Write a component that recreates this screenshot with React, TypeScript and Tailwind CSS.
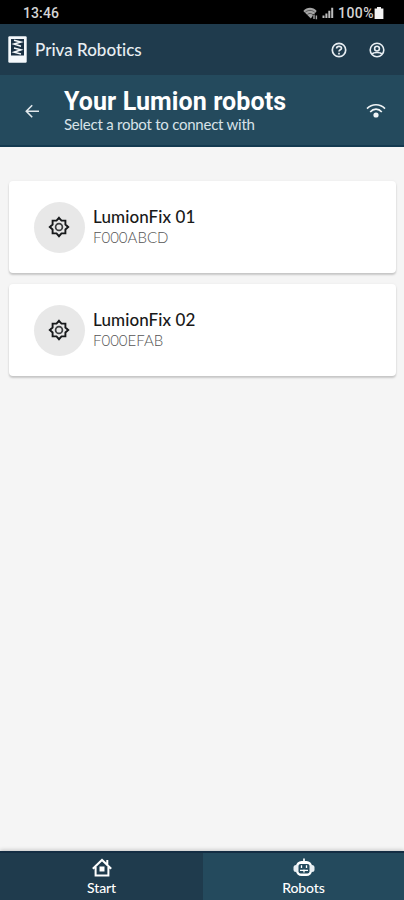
import React from "react";

function Gear() {
  return (
    <svg className="-ml-px" width="22" height="22" viewBox="0 0 22 22" fill="none" stroke="#17191b" strokeWidth="1.9" strokeLinejoin="miter">
      <path d="M11 1.8 L13.5 4.6 H17.4 V8.5 L20.2 11 L17.4 13.5 V17.4 H13.5 L11 20.2 L8.5 17.4 H4.6 V13.5 L1.8 11 L4.6 8.5 V4.6 H8.5 Z" />
      <circle cx="11" cy="11" r="3.4" stroke="#3b3d3f" strokeWidth="1.7" />
    </svg>
  );
}

function StatusBar() {
  return (
    <div className="flex h-6 shrink-0 items-center bg-black pt-[2px] pl-[23px] text-[#d4d4d4]">
      <span className="font-['Roboto'] text-[14px] leading-none font-medium tracking-[0.1px]">13:46</span>
      <div className="ml-auto flex items-center pr-5">
        <svg width="16" height="13" viewBox="0 0 16 13">
          <path d="M0.3 4 C4 -0.2 10 -0.2 13.7 4 L7.8 11.5 Z" fill="#a5a5a5" />
          <path d="M2.3 5.2 C5 2.8 9 2.8 11.7 5.2 M4.4 7.5 C6.2 6 8 6 9.8 7.5" fill="none" stroke="#333" strokeWidth="0.7" />
          <path d="M9.8 7 H15 V12.5 H9.8 Z" fill="#000" />
          <path d="M11 12 V7.5 M13.4 8.5 V12.2" stroke="#a5a5a5" strokeWidth="1.4" />
        </svg>
        <svg className="ml-[3px]" width="12" height="12" viewBox="0 0 12 12" fill="#bdbdbd">
          <path d="M0.5 8.5h2V11h-2z M3.4 6.5h2V11h-2z M6.3 3.8h2V11h-2z M9.2 0.8h2V11h-2z" />
        </svg>
        <span className="ml-[4px] font-['Roboto'] text-[14px] leading-none font-medium tracking-[0.45px]">100%</span>
        <svg width="10" height="12" viewBox="0 0 10 12" fill="#f3f3f3">
          <path d="M3 0h4v1.5h2.4V12H0.6V1.5H3z" />
        </svg>
      </div>
    </div>
  );
}

function AppHeader() {
  return (
    <header className="flex h-[51px] shrink-0 items-center bg-[#1f3b4d] pl-2 text-[#e8eef3]">
      <svg width="19" height="27" viewBox="0 0 19 27">
        <rect x="0.3" y="0.3" width="18.4" height="26.4" rx="1.2" fill="#f5f9fc" />
        <rect x="3" y="3" width="13" height="16.5" fill="#1b3144" />
        <path d="M6 4.2 L13 6 L6 8 L13 10.2 M6 12 L13 13.8 L6 16.2 L13 18" fill="none" stroke="#f5f9fc" strokeWidth="1.5" />
      </svg>
      <span className="ml-2 font-['Lato'] text-[17px] leading-none font-medium tracking-[0.01px]">Priva Robotics</span>
      <div className="ml-auto flex items-center gap-[22px] pr-[19px]">
        <svg width="16" height="16" viewBox="0 0 16 16" fill="none" stroke="currentColor" strokeWidth="1.7">
          <circle cx="8" cy="8" r="6.7" />
          <path d="M5.6 6.5 C5.6 3.6 10.5 3.7 10.5 6.2 C10.5 7.8 8 7.8 8 9.6 M8 10.7 V12.4" />
        </svg>
        <svg width="16" height="16" viewBox="0 0 16 16" fill="none" stroke="currentColor" strokeWidth="1.6">
          <circle cx="8" cy="8" r="6.8" />
          <circle cx="8" cy="6.6" r="2.4" />
          <path d="M3.2 12 C4.6 10 11.4 10 12.8 12" />
        </svg>
      </div>
    </header>
  );
}

function TitleBar() {
  return (
    <div className="flex h-[72px] shrink-0 border-b-2 border-[#143a50] bg-[#244a5d] text-white">
      <svg className="mt-[29px] ml-[25px]" width="15" height="15" viewBox="0 0 15 15" fill="none" stroke="#e1e8ec" strokeWidth="1.6">
        <path d="M14 7.2 H1.5 M7.2 1.2 L1.3 7.2 L7.2 13.2" />
      </svg>
      <div className="mt-[14px] ml-6 whitespace-nowrap">
        <h1 className="font-['Roboto'] text-[25px] leading-[26px] font-bold tracking-[0.1px]">Your Lumion robots</h1>
        <p className="font-['Lato'] text-[15px] leading-[18px] tracking-[-0.24px] text-[#d8e2e8]">Select a robot to connect with</p>
      </div>
      <svg className="mt-[28px] mr-[18px] ml-auto" width="20" height="16" viewBox="0 0 20 16" fill="none" stroke="#f0f5f7" strokeWidth="1.6">
        <path d="M1 5.6 C6 0.5 14 0.5 19 5.6 M4.2 9 C7.5 5.2 12.5 5.2 15.8 9" />
        <circle cx="10" cy="12" r="2.6" fill="#f0f5f7" stroke="none" />
      </svg>
    </div>
  );
}

function RobotCard({ name, serial }: { name: string; serial: string }) {
  return (
    <div className="flex h-[92px] items-center rounded-[4px] bg-white pl-[25px] shadow-[0_2px_2px_rgba(0,0,0,0.18),0_0_3px_rgba(0,0,0,0.05)]">
      <div className="flex size-[51px] items-center justify-center rounded-full bg-[#e8e8e8]">
        <Gear />
      </div>
      <div className="ml-2 font-['Lato'] whitespace-nowrap">
        <div className="-mt-px text-[17px] leading-[21px] font-medium tracking-[0.1px] text-[#191919]">{name}</div>
        <div className="text-[15px] leading-[21px] font-light text-[#555]">{serial}</div>
      </div>
    </div>
  );
}

function BottomNav() {
  return (
    <nav className="flex h-[49px] shrink-0 border-t-2 border-[#142d43] bg-[#1f3b4d] font-['Lato'] text-[14px] leading-[16px] font-medium tracking-[-0.1px] text-white shadow-[0_-1px_4px_rgba(0,0,0,0.2)]">
      <div className="flex w-[203px] flex-col items-center pt-[5px]">
        <svg width="20" height="19" viewBox="0 0 20 19" fill="none" stroke="#fff" strokeWidth="2">
          <path d="M0.8 10.8 L10 2 L19.2 10.8 M3.6 9 V17.6 H16.4 V9 M15.3 2 V7" />
          <path d="M7.5 8.5h5v5h-5z" fill="#fff" stroke="none" />
        </svg>
        <span className="mt-[3px]">Start</span>
      </div>
      <div className="flex flex-1 flex-col items-center bg-[#244a5d] pt-[5px]">
        <svg width="22" height="19" viewBox="0 0 22 19">
          <path d="M11 0.5 V4" stroke="#fff" strokeWidth="1.7" />
          <rect x="3" y="3" width="16" height="15" rx="5.5" fill="#fff" />
          <rect x="0.5" y="7" width="21" height="7" rx="2.5" fill="#e8eef2" />
          <rect x="5.5" y="6" width="11" height="9.5" rx="2" fill="#244a5d" />
          <path d="M8.5 7.3 V10 M13.5 7.3 V10 M7 12.4 H15 M11 11.5 V14.5" stroke="#fff" strokeWidth="1.3" />
        </svg>
        <span className="mt-[3px]">Robots</span>
      </div>
    </nav>
  );
}

export default function App() {
  return (
    <div className="flex h-[900px] w-[404px] flex-col overflow-hidden bg-[#f5f5f5]">
      <StatusBar />
      <AppHeader />
      <TitleBar />
      <main className="flex flex-1 flex-col gap-[11px] pt-[34px] pr-2 pl-[9px]">
        <RobotCard name="LumionFix 01" serial="F000ABCD" />
        <RobotCard name="LumionFix 02" serial="F000EFAB" />
      </main>
      <BottomNav />
    </div>
  );
}
